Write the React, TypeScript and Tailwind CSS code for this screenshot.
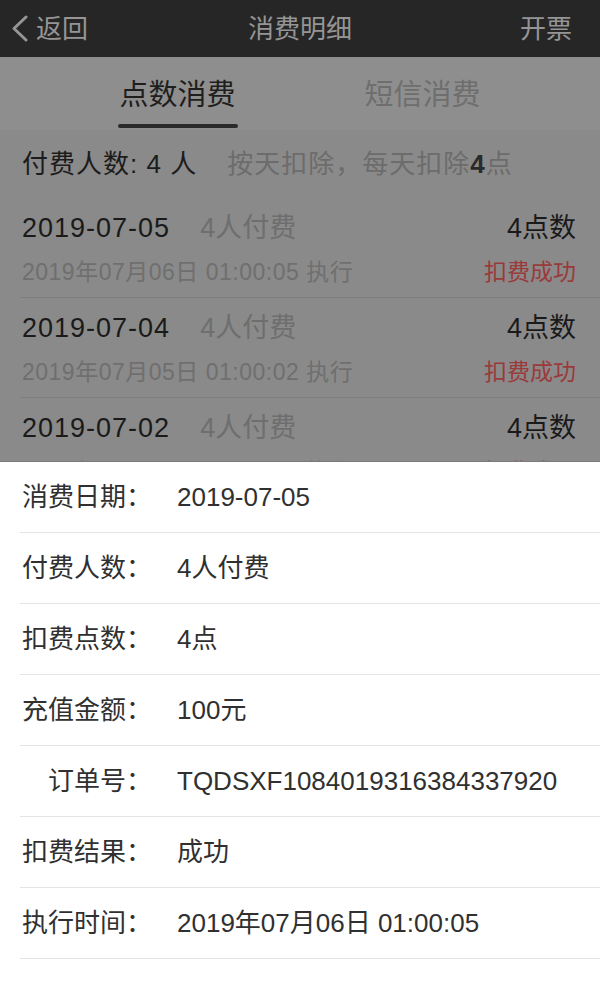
import React from "react";

const rows = [
  { date: "2019-07-05", exec: "2019年07月06日 01:00:05 执行" },
  { date: "2019-07-04", exec: "2019年07月05日 01:00:02 执行" },
  { date: "2019-07-02", exec: "2019年07月03日 01:00:04 执行" },
];

const details = [
  { label: "消费日期：", value: "2019-07-05" },
  { label: "付费人数：", value: "4人付费" },
  { label: "扣费点数：", value: "4点" },
  { label: "充值金额：", value: "100元" },
  { label: "订单号：", value: "TQDSXF1084019316384337920" },
  { label: "扣费结果：", value: "成功" },
  { label: "执行时间：", value: "2019年07月06日 01:00:05" },
];

export default function App() {
  return (
    <div className="w-[600px] h-[996px] overflow-hidden flex flex-col bg-white font-['Liberation_Sans','Noto_Sans_CJK_SC',sans-serif]">
      {/* Dimmed page behind the sheet */}
      <div className="h-[461px] shrink-0 overflow-hidden bg-[#8a8a8a]">
        {/* Nav bar */}
        <div className="h-[57px] bg-[#262626] grid grid-cols-3 items-center text-[#959595] text-[26px] leading-none">
          <div className="flex items-center pl-[10px]">
            <svg width="19" height="27" viewBox="0 0 19 27" fill="none">
              <path d="M16 2 L4 13.5 L16 25" stroke="#959595" strokeWidth="3" strokeLinecap="round" strokeLinejoin="round" />
            </svg>
            <span className="ml-[7px]">返回</span>
          </div>
          <div className="text-center">消费明细</div>
          <div className="justify-self-end pr-[28px]">开票</div>
        </div>

        {/* Tabs */}
        <div className="h-[73px] bg-[#8e8e8e] flex justify-center gap-[125px] pt-[20px]">
          <div className="flex flex-col items-center">
            <span className="text-[29px] leading-[36px] text-[#1e1e1e]">点数消费</span>
            <div className="mt-[11px] w-[120px] h-[4px] rounded-full bg-[#2a2a2a]" />
          </div>
          <div className="flex flex-col items-center">
            <span className="text-[29px] leading-[36px] text-[#6e6e6e]">短信消费</span>
            <div className="mt-[11px] w-[120px] h-[4px]" />
          </div>
        </div>

        {/* Summary */}
        <div className="h-[68px] flex items-center pl-[22px] text-[26px] leading-none">
          <span className="text-[#1c1c1c] tracking-[1px]">付费人数: 4 人</span>
          <span className="ml-[30px] text-[#6c6c6c] tracking-[1px]">
            按天扣除，每天扣除<span className="font-bold text-[#2a2a2a]">4</span>点
          </span>
        </div>

        {/* List */}
        <div>
          {rows.map((r) => (
            <div key={r.date} className="ml-[20px] h-[100px] border-b border-[#7e7e7e] pr-[24px] pl-[2px] flex flex-col">
              <div className="mt-[12px] h-[36px] flex items-center justify-between">
                <div className="flex items-center">
                  <span className="text-[27px] tracking-[1px] text-[#1a1a1a]">{r.date}</span>
                  <span className="ml-[30px] text-[27px] text-[#6e6e6e]">4人付费</span>
                </div>
                <span className="text-[27px] text-[#1a1a1a]">4点数</span>
              </div>
              <div className="mt-[8px] h-[36px] flex items-center justify-between">
                <span className="text-[23px] tracking-[0.5px] text-[#6f6f6f]">{r.exec}</span>
                <span className="text-[23px] text-[#9a3a3a]">扣费成功</span>
              </div>
            </div>
          ))}
        </div>
      </div>

      {/* Bottom sheet */}
      <div className="flex-1 bg-white border-t border-[#7a7a7a]">
        {details.map((d) => (
          <div key={d.label} className="ml-[20px] h-[71px] border-b border-[#e4e4e4] flex items-center pl-[2px] text-[26px] text-[#303030]">
            <span className="w-[130px] text-right">{d.label}</span>
            <span className="ml-[25px]">{d.value}</span>
          </div>
        ))}
      </div>
    </div>
  );
}
